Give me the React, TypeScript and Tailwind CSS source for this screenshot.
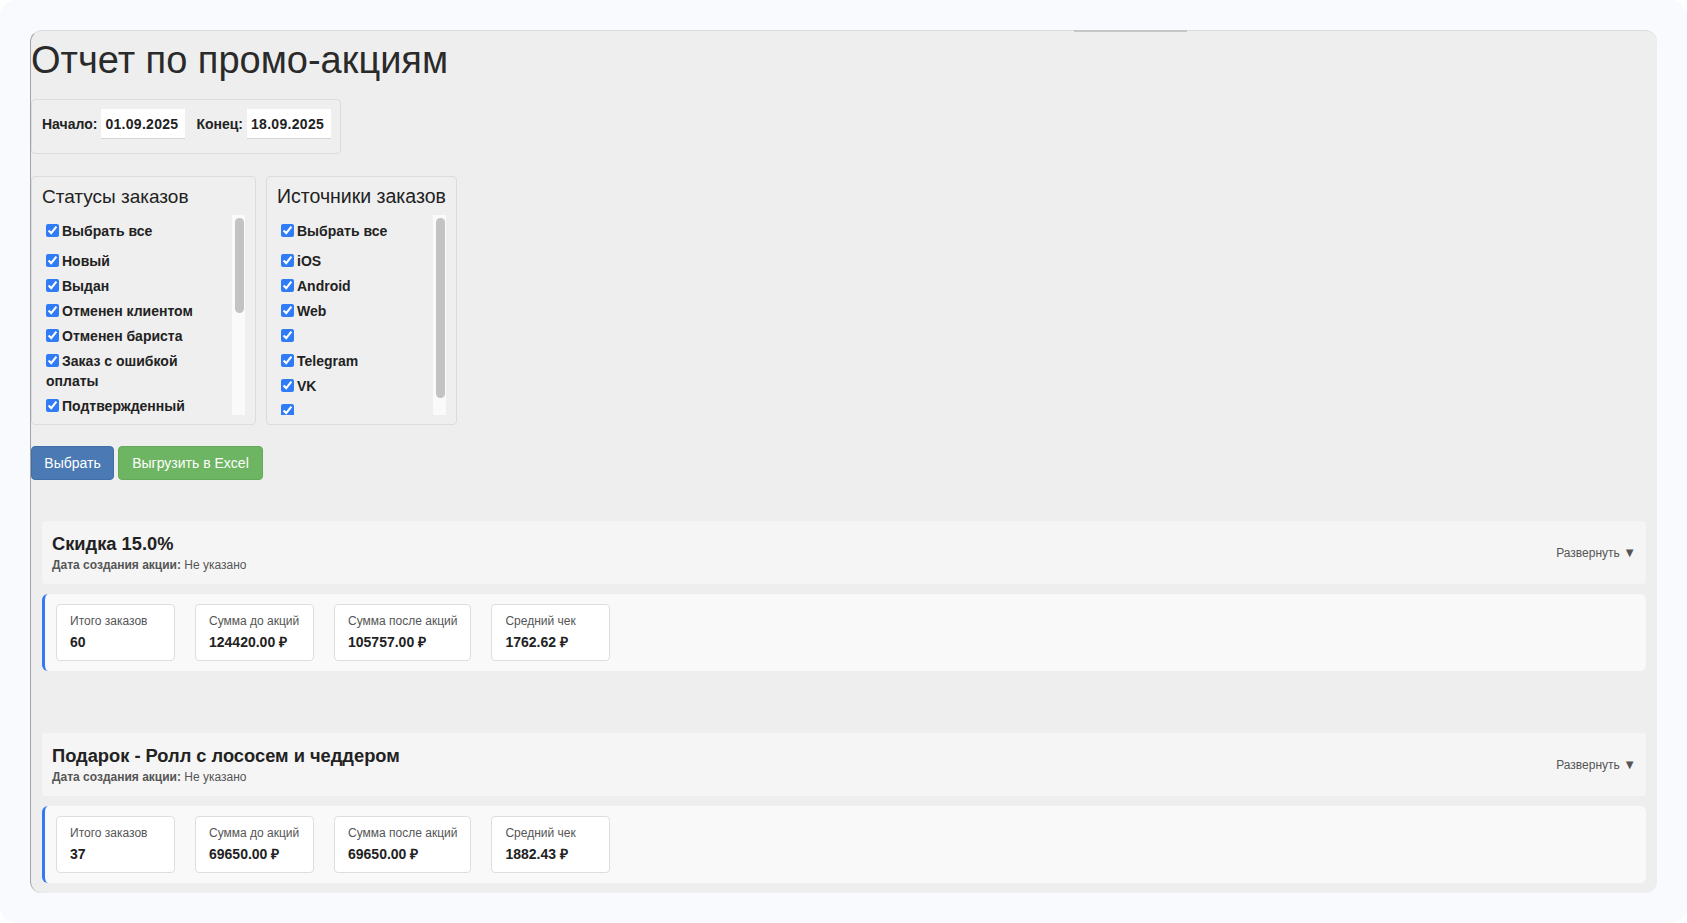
import React from "react"

const statuses = [
  "Новый",
  "Выдан",
  "Отменен клиентом",
  "Отменен бариста",
  "Заказ с ошибкой оплаты",
  "Подтвержденный",
]

const sources = ["iOS", "Android", "Web", "", "Telegram", "VK", ""]

const promos = [
  {
    title: "Скидка 15.0%",
    orders: "60",
    before: "124420.00 ₽",
    after: "105757.00 ₽",
    avg: "1762.62 ₽",
  },
  {
    title: "Подарок - Ролл с лососем и чеддером",
    orders: "37",
    before: "69650.00 ₽",
    after: "69650.00 ₽",
    avg: "1882.43 ₽",
  },
]

function CheckItem({ label, first }: { label: string; first?: boolean }) {
  return (
    <label
      className={`block pl-[4px] text-[14px] leading-[20px] font-bold text-[#222] ${first ? "mb-[10px]" : "mb-[5px]"}`}
    >
      <input
        type="checkbox"
        defaultChecked
        className="my-0 ml-0 mr-[3px] align-[-1px] accent-[#2f7cf6]"
      />
      {label}
    </label>
  )
}

// list with a drawn scrollbar (the headless page hides native ones)
function CheckList({ items, thumb }: { items: string[]; thumb: string }) {
  return (
    <div className="flex h-[200px]">
      <div className="flex-1 overflow-hidden pt-[6px]">
        <CheckItem label="Выбрать все" first />
        {items.map((s, i) => (
          <CheckItem key={i} label={s} />
        ))}
      </div>
      <div className="w-[13px] bg-[#fafafa] pt-[3px] pr-[1px] pl-[3px]">
        <div className={`${thumb} rounded-full bg-[#c3c3c3]`} />
      </div>
    </div>
  )
}

function Stat({ label, value }: { label: string; value: string }) {
  return (
    <div className="min-w-[119px] rounded-[4px] border border-[#dedede] bg-white px-[13px] pt-[9px] pb-[9px]">
      <div className="text-[12px] leading-[14px] text-[#555]">{label}</div>
      <div className="mt-[6px] text-[14px] leading-[17px] font-bold text-[#222]">{value}</div>
    </div>
  )
}

export default function App() {
  return (
    <div className="min-h-screen bg-white font-['Liberation_Sans',Arial,sans-serif]">
      <div className="min-h-[923px] rounded-[16px] bg-[#f9fafd] p-[30px]">
        <div className="relative rounded-[12px] border-t border-l border-t-[#dcdcdc] border-l-[#a3a3a3] bg-[#eeeeee] pb-[10px]">
          <div className="absolute -top-px left-[1043px] h-[2px] w-[113px] bg-[#c6c6c6]" />

          <h1 className="mt-[8px] text-[38px] leading-[42px] text-[#2a2a2a]">Отчет по промо-акциям</h1>

          {/* period */}
          <div className="mt-[18px] flex w-[310px] items-center rounded-[4px] border border-[#dcdcdc] bg-[#efefef] px-[10px] pt-[9px] pb-[14px]">
            <span className="text-[14px] font-bold text-[#222]">Начало:</span>
            <input
              type="text"
              readOnly
              defaultValue="01.09.2025"
              className="ml-[4px] h-[30px] w-[84px] border-b border-[#d5d5d5] bg-white px-[4px] text-[14px] font-semibold tracking-[0.3px] text-[#222] outline-none"
            />
            <span className="ml-[11px] text-[14px] font-bold text-[#222]">Конец:</span>
            <input
              type="text"
              readOnly
              defaultValue="18.09.2025"
              className="ml-[4px] h-[30px] w-[84px] border-b border-[#d5d5d5] bg-white px-[4px] text-[14px] font-semibold tracking-[0.3px] text-[#222] outline-none"
            />
          </div>

          {/* filters */}
          <div className="mt-[22px] flex items-start gap-[10px]">
            <div className="w-[225px] rounded-[4px] border border-[#dcdcdc] bg-[#efefef] px-[10px] pt-[9px] pb-[9px]">
              <h3 className="mb-[8px] text-[19px] leading-[21px] text-[#222]">Статусы заказов</h3>
              <CheckList items={statuses} thumb="h-[95px]" />
            </div>
            <div className="w-[191px] rounded-[4px] border border-[#dcdcdc] bg-[#efefef] px-[10px] pt-[9px] pb-[9px]">
              <h3 className="mb-[8px] text-[19.5px] leading-[21px] whitespace-nowrap text-[#222]">Источники заказов</h3>
              <CheckList items={sources} thumb="h-[180px]" />
            </div>
          </div>

          <div className="mt-[21px] flex gap-[4px]">
            <button className="h-[34px] w-[83px] rounded-[4px] border border-[#3f6fa9] bg-[#4a79b3] text-[14px] text-white">
              Выбрать
            </button>
            <button className="h-[34px] w-[145px] rounded-[4px] border border-[#63a958] bg-[#6eb563] text-[14px] text-white">
              Выгрузить в Excel
            </button>
          </div>

          {/* promo list */}
          <div className="mt-[41px] flex flex-col gap-[62px] px-[11px]">
            {promos.map((p) => (
              <div key={p.title}>
                <div className="flex items-center justify-between rounded-[4px] bg-[#f5f5f5] pt-[12px] pr-[10px] pb-[11px] pl-[10px]">
                  <div>
                    <div className="text-[18.3px] leading-[22px] font-bold text-[#222]">{p.title}</div>
                    <div className="mt-[2px] text-[12px] leading-[16px] text-[#555]">
                      <b>Дата создания акции:</b> Не указано
                    </div>
                  </div>
                  <div className="text-[12px] text-[#555]">
                    Развернуть <span className="text-[13px]">▼</span>
                  </div>
                </div>
                <div className="mt-[10px] flex gap-[20px] rounded-[6px] border-l-[3px] border-l-[#3478f6] bg-[#f9f9f9] py-[10px] pl-[11px]">
                  <Stat label="Итого заказов" value={p.orders} />
                  <Stat label="Сумма до акций" value={p.before} />
                  <Stat label="Сумма после акций" value={p.after} />
                  <Stat label="Средний чек" value={p.avg} />
                </div>
              </div>
            ))}
          </div>
        </div>
      </div>
    </div>
  )
}
